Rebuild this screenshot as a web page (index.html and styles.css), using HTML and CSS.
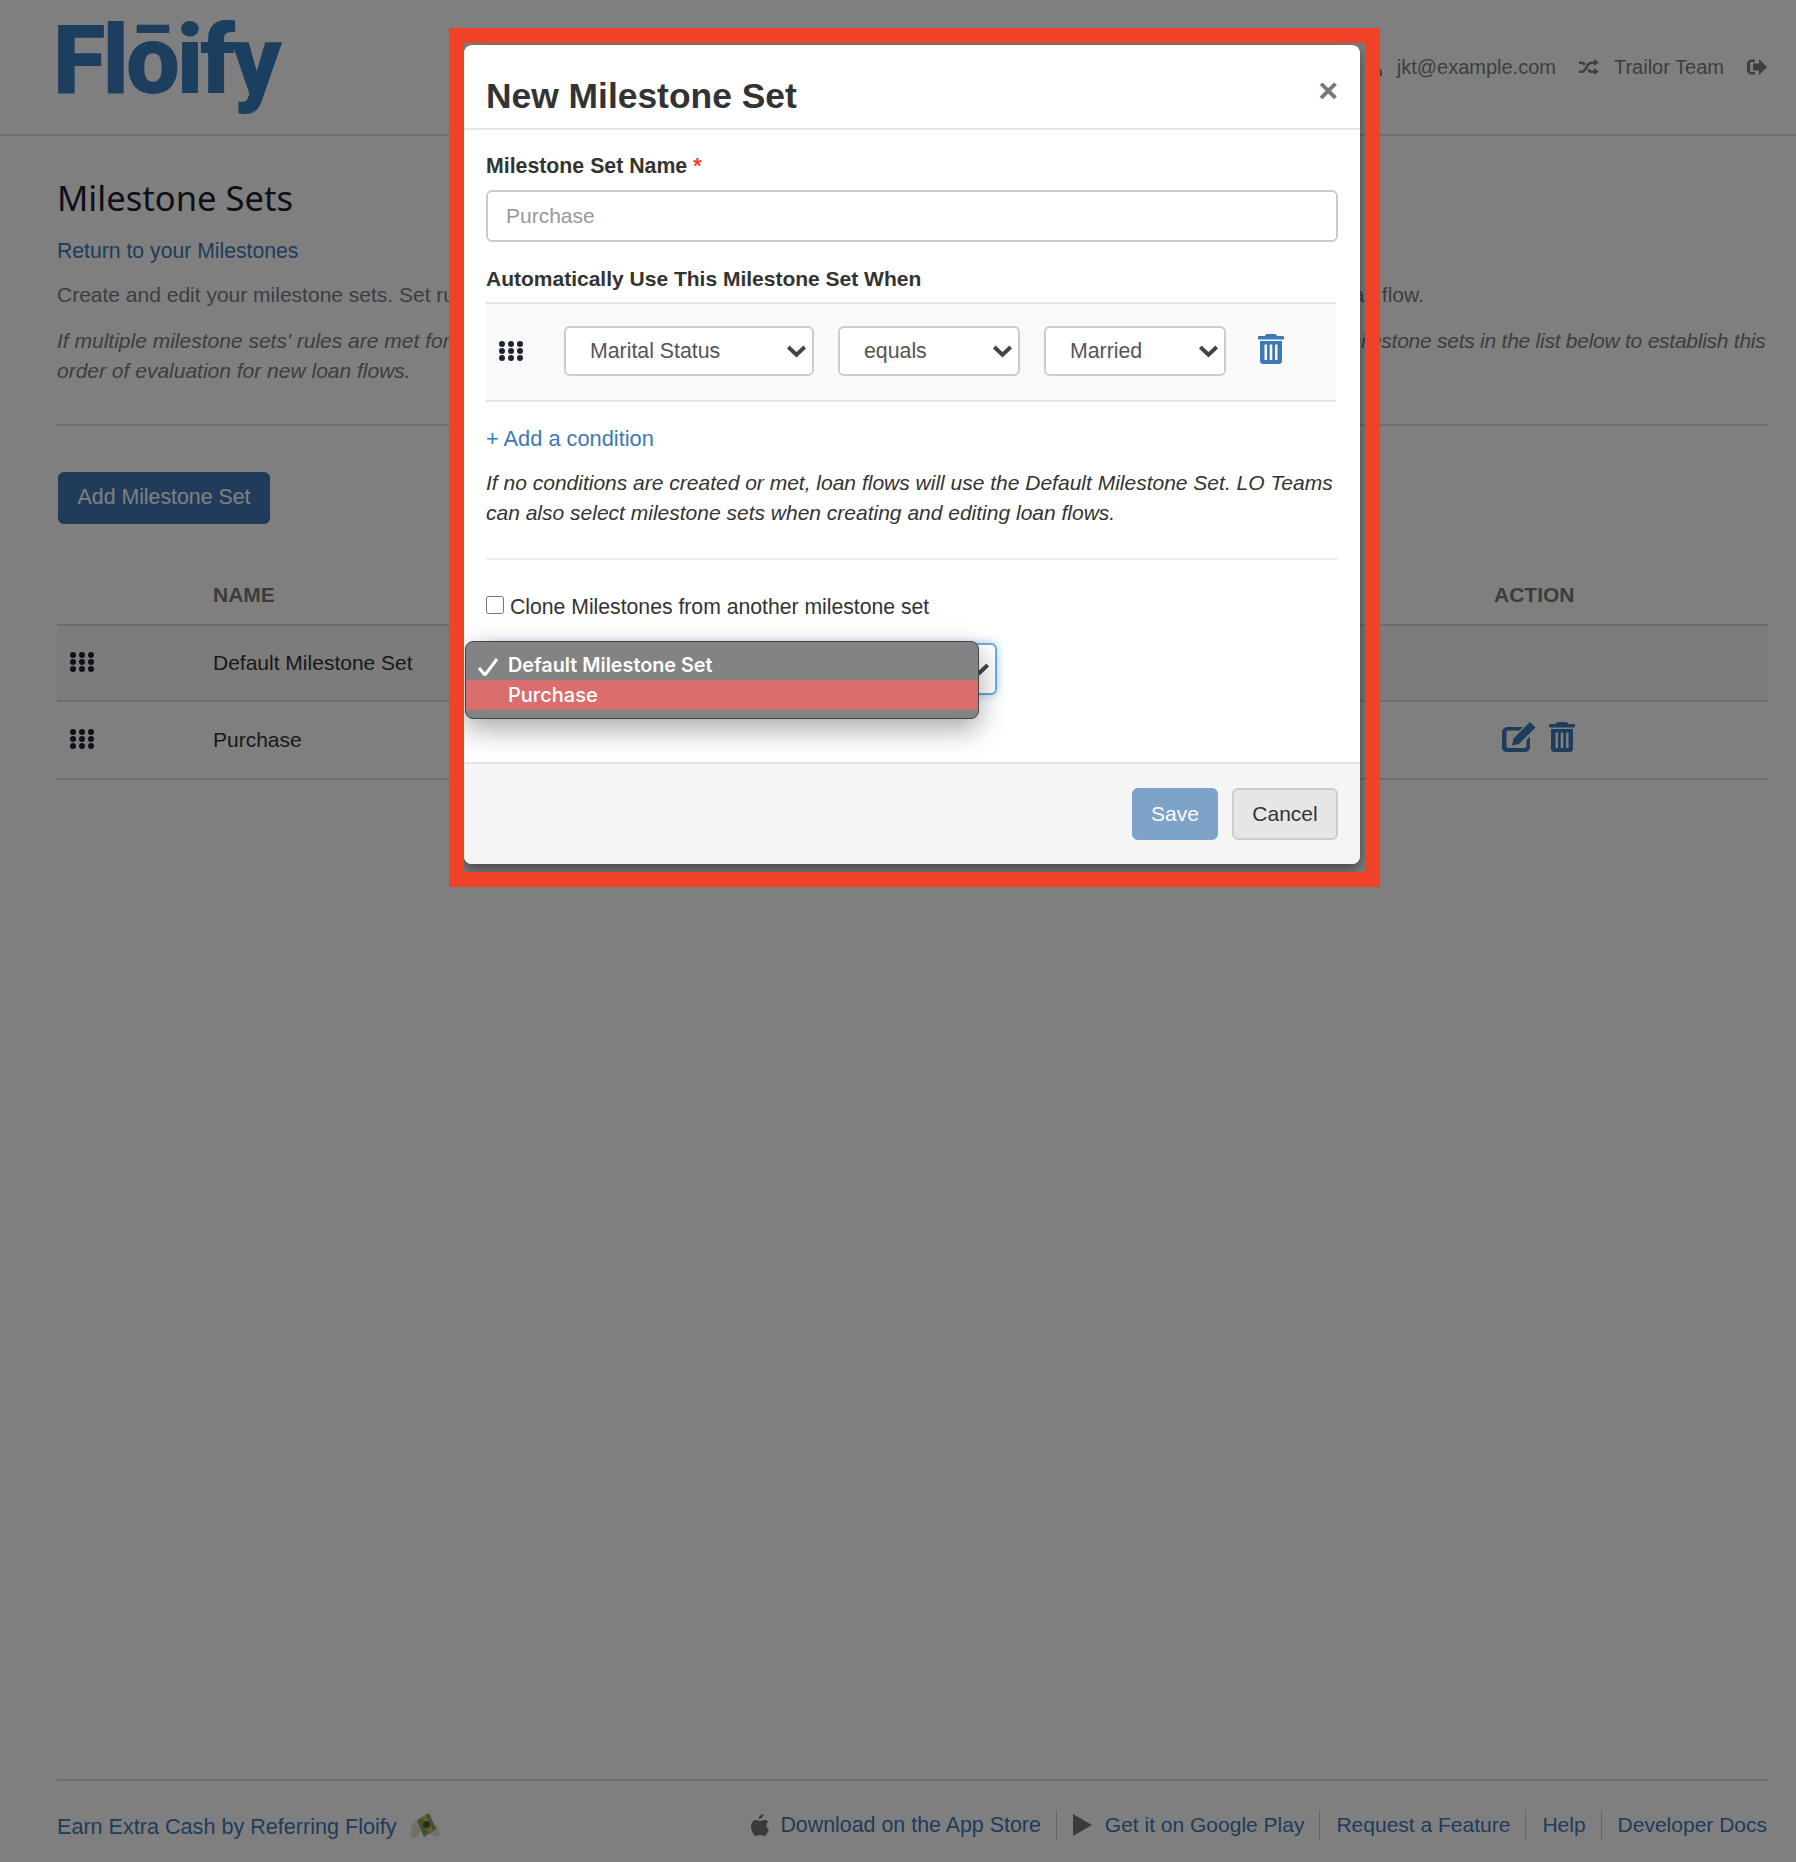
FILE: index.html
```html
<!DOCTYPE html>
<html lang="en">
<head>
    <meta charset="UTF-8">
    <meta name="viewport" content="width=device-width, initial-scale=1.0">
    <title>Milestone Sets</title>
    <link rel="stylesheet" href="styles.css">
</head>
<body>
    <header class="topbar">
        <a class="logo" href="#">Flōify</a>
        <nav class="topnav">
            <span class="topnav-item">
                <svg class="icon-user" viewBox="0 0 16 18"><circle cx="8" cy="5" r="4.5"/><path d="M0 18v-3c0-4 3-6 4-6 1 1 2.500 1.500 4 1.500s3-.5 4-1.500c1 0 4 2 4 6v3z"/></svg>
                jkt@example.com
            </span>
            <span class="topnav-item">
                <svg class="icon-shuffle" viewBox="0 0 20 16"><path d="M15 0l5 3.500L15 7V5h-2c-1.500 0-2.500 1-3.500 2.500L7.500 11C6 13 4.500 14 2.500 14H0v-2.500h2.500c1 0 2-.8 3-2.300l2-3.400C9 3.500 10.500 2.500 13 2.500h2zM0 2.500h2.500c1.800 0 3 .8 4.200 2.300L5.200 7C4.300 5.700 3.500 5 2.500 5H0zM15 9l5 3.500L15 16v-2h-2c-2 0-3.300-.8-4.500-2.300L10 9.500c1 1.400 1.800 2 3 2h2z"/></svg>
                Trailor Team
            </span>
            <svg class="icon-signout" viewBox="0 0 20 16"><path d="M8 3H4.500C3.700 3 3 3.700 3 4.500v7c0 .8.700 1.500 1.500 1.500H8v2.500H4.500C2 15.500 0 13.800 0 11.500v-7C0 2.200 2 .5 4.500.5H8z"/><path d="M12 0l8 8-8 8v-4.500H6v-7h6z"/></svg>
        </nav>
    </header>

    <main class="content">
        <h1>Milestone Sets</h1>
        <p class="back-link"><a href="#">Return to your Milestones</a></p>
        <p class="intro">Create and edit your milestone sets. Set rules to determine which milestone set is automatically applied when your team creates any new loan flow.</p>
        <p class="intro-note">If multiple milestone sets' rules are met for a new loan flow, the first matching set in the order listed is used for that flow. Drag and drop the <span class="note-tail">milestone sets in the list below to establish this</span> order of evaluation for new loan flows.</p>
        <hr class="rule">
        <button class="btn-add" type="button">Add Milestone Set</button>

        <table class="sets">
            <thead>
                <tr>
                    <th class="col-grip"></th>
                    <th class="col-name">NAME</th>
                    <th class="col-action">ACTION</th>
                </tr>
            </thead>
            <tbody>
                <tr class="striped">
                    <td><span class="grip"><i></i><i></i><i></i><i></i><i></i><i></i><i></i><i></i><i></i></span></td>
                    <td>Default Milestone Set</td>
                    <td></td>
                </tr>
                <tr class="last-row">
                    <td><span class="grip"><i></i><i></i><i></i><i></i><i></i><i></i><i></i><i></i><i></i></span></td>
                    <td>Purchase</td>
                    <td>
                        <span class="row-actions">
                            <svg class="icon-edit" viewBox="0 0 34 30"><path d="M6 5h15l-3.500 3.500H6.500c-1 0-2 1-2 2V24c0 1 1 2 2 2h16c1 0 2-1 2-2v-6l3.500-3.500V25c0 3-2 5-5 5H5c-3 0-5-2-5-5V10c0-3 3-5 6-5z"/><path d="M28 0l5.500 5.500L17 22l-7 1.500L11.500 16.500z"/></svg>
                            <svg class="icon-trash" viewBox="0 0 26 30"><path d="M9 0h8c1 0 2 1 2 2h6c.6 0 1 .5 1 1v1.500c0 .5-.4 1-1 1H1c-.6 0-1-.5-1-1V3c0-.5.400-1 1-1h6c0-1 1-2 2-2z"/><path fill-rule="evenodd" d="M2 7h22v20c0 2-1.500 3-3 3H5c-1.500 0-3-1-3-3zM6.500 10.500v15.500H9V10.500zM11.700 10.500v15.500h2.600V10.500zM17 10.500v15.500h2.500V10.500z"/></svg>
                        </span>
                    </td>
                </tr>
            </tbody>
        </table>
    </main>

    <footer class="page-footer">
        <a class="refer" href="#">Earn Extra Cash by Referring Floify
            <svg class="icon-money" viewBox="0 0 30 30"><path d="M9 8C2 9-1 17 2 27c5-1 8-5 10-10zM20 12c6-2 10 3 9 12-5 1-9-1-12-5z" fill="#e6dfc8"/><path d="M7 8l12-7 7 16-12 8z" fill="#8aa06c"/><path d="M12 5l4-2 7 16-4 2z" fill="#e8b83e"/><circle cx="16.500" cy="12.500" r="3.500" fill="#4a5c32"/></svg>
        </a>
        <nav class="footer-links">
            <a class="app-link" href="#"><svg class="icon-apple" viewBox="0 0 18 22"><path d="M12.500 0c.2 2.600-2 5-4.600 4.900C7.500 2.500 10 .2 12.500 0zM17.500 7.500c-3 2-2.800 6.500.5 8-1 2.800-3 6.500-5.300 6.500-1.300 0-2.200-.9-3.700-.9s-2.500.9-3.700.9C2.800 22 0 16.800 0 12.500 0 8.300 2.700 6 5.300 6c1.500 0 2.700 1 3.700 1s2.500-1.100 4.200-1.100c1.700 0 3.300.6 4.300 1.600z"/></svg>Download on the App Store</a>
            <a href="#"><svg class="icon-play" viewBox="0 0 19 22"><path d="M0 0l19 11L0 22z"/></svg>Get it on Google Play</a>
            <a href="#">Request a Feature</a>
            <a href="#">Help</a>
            <a href="#">Developer Docs</a>
        </nav>
    </footer>

    <div class="backdrop"></div>

    <div class="modal-frame">
        <div class="modal">
            <div class="modal-header">
                <h2>New Milestone Set</h2>
                <span class="close">×</span>
            </div>
            <div class="modal-body">
                <label class="field-label name-label" for="setName">Milestone Set Name <span class="required">*</span></label>
                <input id="setName" class="text-input" type="text" placeholder="Purchase">

                <div class="field-label rules-label">Automatically Use This Milestone Set When</div>
                <div class="condition">
                    <span class="grip"><i></i><i></i><i></i><i></i><i></i><i></i><i></i><i></i><i></i></span>
                    <div class="select select-field"><span>Marital Status</span><svg class="chevron" viewBox="0 0 22 14"><path d="M3 0L0 3.500 11 14 22 3.500 19 0 11 7.500z"/></svg></div>
                    <div class="select select-op"><span>equals</span><svg class="chevron" viewBox="0 0 22 14"><path d="M3 0L0 3.500 11 14 22 3.500 19 0 11 7.500z"/></svg></div>
                    <div class="select select-value"><span>Married</span><svg class="chevron" viewBox="0 0 22 14"><path d="M3 0L0 3.500 11 14 22 3.500 19 0 11 7.500z"/></svg></div>
                    <svg class="icon-trash" viewBox="0 0 26 30"><path d="M9 0h8c1 0 2 1 2 2h6c.6 0 1 .5 1 1v1.500c0 .5-.4 1-1 1H1c-.6 0-1-.5-1-1V3c0-.5.400-1 1-1h6c0-1 1-2 2-2z"/><path fill-rule="evenodd" d="M2 7h22v20c0 2-1.500 3-3 3H5c-1.500 0-3-1-3-3zM6.500 10.500v15.500H9V10.500zM11.700 10.500v15.500h2.600V10.500zM17 10.500v15.500h2.500V10.500z"/></svg>
                </div>
                <a class="add-condition" href="#">+ Add a condition</a>
                <p class="modal-note">If no conditions are created or met, loan flows will use the Default Milestone Set. LO Teams can also select milestone sets when creating and editing loan flows.</p>
                <hr class="modal-rule">
                <label class="clone-check"><input type="checkbox"> Clone Milestones from another milestone set</label>
                <div class="select select-clone"><span>Default Milestone Set</span><svg class="chevron" viewBox="0 0 22 14"><path d="M3 0L0 3.500 11 14 22 3.500 19 0 11 7.500z"/></svg></div>
            </div>
            <div class="modal-footer">
                <button class="btn-save" type="button">Save</button>
                <button class="btn-cancel" type="button">Cancel</button>
            </div>

            <div class="popup-menu">
                <div class="popup-item popup-checked">
                    <svg class="icon-check" viewBox="0 0 20 18"><path d="M1 10l6 7L19 1" /></svg>
                    Default Milestone Set
                </div>
                <div class="popup-item popup-active">Purchase</div>
            </div>
        </div>
    </div>
</body>
</html>
```

FILE: styles.css
```css
* {
    margin: 0;
    padding: 0;
    box-sizing: border-box;
}

html, body {
    height: 100%;
}

body {
    position: relative;
    display: flex;
    flex-direction: column;
    min-height: 1862px;
    background: #fff;
    color: #787c85;
    font-family: "Liberation Sans", Arial, sans-serif;
    font-size: 21px;
    line-height: 30px;
}

a {
    color: #3d79b6;
    text-decoration: none;
}

/* top bar */
.topbar {
    display: flex;
    justify-content: space-between;
    align-items: center;
    height: 136px;
    padding: 0 29px 0 57px;
    border-bottom: 2px solid #ddd;
}

.logo {
    margin: -15px 0 0 -4px;
    color: #387fc0;
    font-family: Roboto, sans-serif;
    font-size: 96px;
    font-weight: 900;
    letter-spacing: -3px;
    line-height: 134px;
}

.topnav {
    display: flex;
    align-items: center;
    gap: 23px;
    font-size: 20px;
}

.topnav-item {
    display: flex;
    align-items: center;
    gap: 15px;
}

.topnav svg {
    fill: #787c85;
}

.icon-user {
    width: 16px;
    height: 18px;
}

.icon-shuffle {
    width: 20px;
    height: 16px;
}

.icon-signout {
    width: 20px;
    height: 16px;
}

/* page content */
.content {
    padding: 0 28px 0 57px;
}

h1 {
    margin-top: 39px;
    color: #1a2030;
    font-family: "Noto Sans", sans-serif;
    font-size: 34.6px;
    font-weight: 400;
    line-height: 46px;
}

.back-link {
    margin-top: 15px;
    font-size: 21.2px;
}

.intro {
    margin-top: 14px;
}

.intro-note {
    margin-top: 16px;
    font-style: italic;
}

.note-tail {
    letter-spacing: -0.25px;
}

.rule {
    margin-top: 38px;
    border: 0;
    border-top: 2px solid #ddd;
}

.btn-add {
    display: block;
    width: 212px;
    height: 52px;
    margin: 46px 0 0 1px;
    padding-bottom: 2px;
    background: #4278b4;
    border: 0;
    border-radius: 6px;
    color: #fff;
    font: inherit;
    font-size: 21.3px;
}

.sets {
    width: 100%;
    margin-top: 33px;
    border-collapse: collapse;
    color: #333;
}

.sets th {
    height: 68px;
    padding-top: 8px;
    border-bottom: 2px solid #ddd;
    color: #787878;
    text-align: left;
    vertical-align: middle;
}

.sets td {
    height: 76px;
    border-bottom: 2px solid #ddd;
    vertical-align: middle;
}

.sets .last-row td {
    height: 78px;
}

.col-grip {
    width: 156px;
}

.col-action {
    width: 274px;
}

.striped {
    background: #f9f9f9;
}

.sets .grip {
    margin: 0 0 4px 13px;
}

.grip {
    display: inline-grid;
    grid-template-columns: repeat(3, 6px);
    gap: 1px 3px;
    vertical-align: middle;
}

.grip i {
    width: 6px;
    height: 6px;
    background: #1d2330;
    border-radius: 50%;
}

.row-actions {
    display: flex;
    align-items: flex-end;
    gap: 13px;
    margin: 0 0 7px 8px;
}

.row-actions svg {
    fill: #3d79b6;
}

.icon-edit {
    width: 34px;
    height: 30px;
}

.icon-trash {
    width: 26px;
    height: 30px;
    fill: #3d79b6;
}

/* page footer */
.page-footer {
    display: flex;
    justify-content: space-between;
    align-items: center;
    margin: auto 28px 0 57px;
    height: 83px;
    padding: 6px 1px 0 0;
    border-top: 2px solid #ddd;
}

.refer {
    display: flex;
    align-items: center;
    gap: 13px;
    margin-top: 4px;
    font-size: 21.6px;
}

.icon-money {
    width: 30px;
    height: 30px;
    flex-shrink: 0;
}

.footer-links {
    display: flex;
    align-items: center;
}

.footer-links a {
    display: flex;
    align-items: center;
    height: 30px;
    padding: 0 15px 0 16px;
    border-left: 1px solid #ccc;
}

.footer-links .app-link {
    font-size: 21.4px;
}

.footer-links a:first-child {
    border-left: 0;
}

.footer-links a:last-child {
    padding-right: 0;
}

.footer-links svg {
    fill: #777;
}

.icon-apple {
    width: 18px;
    height: 22px;
    margin-right: 11px;
}

.icon-play {
    width: 19px;
    height: 22px;
    margin-right: 13px;
}

/* modal */
.backdrop {
    position: absolute;
    inset: 0;
    background: rgba(0, 0, 0, 0.5);
}

.modal-frame {
    position: absolute;
    top: 28px;
    left: 449px;
    width: 931px;
    height: 859px;
    overflow: hidden;
    border: 15px solid #ef4226;
}

.modal {
    position: relative;
    display: flex;
    flex-direction: column;
    width: 896px;
    height: 819px;
    margin-top: 2px;
    background: #fff;
    border-radius: 8px;
    box-shadow: 0 5px 15px rgba(0, 0, 0, 0.5);
    color: #333;
}

.modal-header {
    display: flex;
    justify-content: space-between;
    height: 85px;
    padding: 28px 22px 0 22px;
    border-bottom: 2px solid #e5e5e5;
}

.modal-header h2 {
    font-size: 35.4px;
    font-weight: 700;
    line-height: 46px;
}

.close {
    margin-top: -1px;
    color: #777;
    font-size: 34px;
    font-weight: 700;
    line-height: 36px;
}

.modal-body {
    flex: 1;
    padding: 21px 22px 0 22px;
}

.field-label {
    display: block;
    font-weight: 700;
}

.name-label {
    font-size: 21.3px;
}

.required {
    color: #ef4226;
}

.text-input {
    display: block;
    width: 100%;
    height: 52px;
    margin-top: 9px;
    padding: 0 18px;
    border: 2px solid #ccc;
    border-radius: 6px;
    color: #555;
    font: inherit;
}

.text-input::placeholder {
    color: #999;
}

.rules-label {
    margin-top: 22px;
}

.condition {
    display: flex;
    align-items: center;
    width: 850px;
    height: 100px;
    margin-top: 8px;
    padding: 0 13px 2px;
    background: #f9f9f9;
    border-top: 2px solid #e5e5e5;
    border-bottom: 2px solid #e5e5e5;
}

.condition .icon-trash {
    margin: -4px 0 0 32px;
}

.select {
    display: flex;
    justify-content: space-between;
    align-items: center;
    height: 50px;
    padding: 0 6px 0 24px;
    background: #fff;
    border: 2px solid #ccc;
    border-radius: 6px;
    color: #555;
    font-size: 21.3px;
}

.chevron {
    width: 19px;
    height: 13px;
    fill: #444;
}

.select-field {
    width: 250px;
    margin: 0 24px 0 41px;
}

.select-op {
    width: 182px;
    margin-right: 24px;
}

.select-value {
    width: 182px;
}

.add-condition {
    display: block;
    margin-top: 22px;
    font-size: 21.8px;
}

.modal-note {
    margin-top: 14px;
    font-style: italic;
}

.modal-rule {
    margin-top: 30px;
    border: 0;
    border-top: 2px solid #eee;
}

.clone-check {
    display: flex;
    align-items: center;
    gap: 6px;
    margin-top: 32px;
    font-size: 21.2px;
}

.clone-check input {
    width: 18px;
    height: 18px;
    margin: -5px 0 0;
}

.select-clone {
    width: 511px;
    height: 52px;
    margin-top: 21px;
    border-color: #66afe9;
    box-shadow: 0 0 8px rgba(102, 175, 233, 0.6);
}

.modal-footer {
    display: flex;
    justify-content: flex-end;
    align-items: center;
    gap: 14px;
    height: 102px;
    padding-right: 22px;
    background: #f5f5f5;
    border-top: 2px solid #e5e5e5;
    border-radius: 0 0 8px 8px;
}

.modal-footer button {
    height: 52px;
    border-radius: 6px;
    font: inherit;
}

.btn-save {
    width: 86px;
    background: #7da3c8;
    border: 2px solid #7da3c8;
    color: #fff;
}

.btn-cancel {
    width: 106px;
    background: #e6e6e6;
    border: 2px solid #ccc;
    color: #333;
}

/* open select menu */
.popup-menu {
    position: absolute;
    top: 596px;
    left: 1px;
    width: 514px;
    height: 78px;
    padding-top: 8px;
    overflow: hidden;
    background: #818385;
    border: 1px solid #444;
    border-radius: 8px;
    box-shadow: 0 10px 28px rgba(0, 0, 0, 0.35);
    color: #fff;
    font-family: Inter, sans-serif;
    font-size: 20px;
    font-weight: 500;
}

.popup-item {
    position: relative;
    height: 30px;
    padding-left: 42px;
    line-height: 30px;
}

.popup-checked {
    font-size: 19.8px;
    font-weight: 600;
}

.popup-active {
    background: #da6e6e;
}

.icon-check {
    position: absolute;
    top: 8px;
    left: 12px;
    width: 20px;
    height: 18px;
    fill: none;
    stroke: #fff;
    stroke-width: 3;
}
```
